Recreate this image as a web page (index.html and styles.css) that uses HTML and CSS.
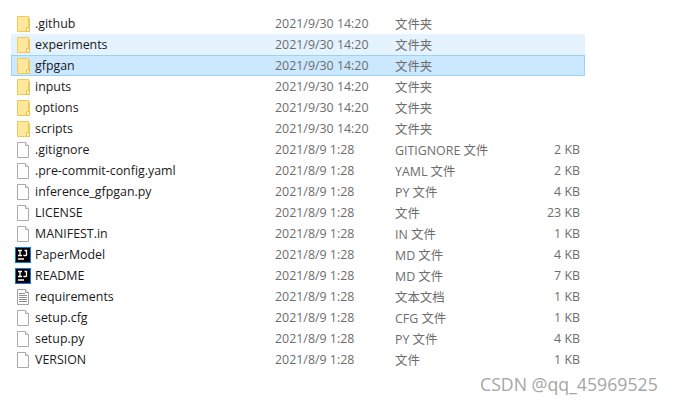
FILE: index.html
```html
<!DOCTYPE html>
<html lang="en">
<head>
    <meta charset="UTF-8"/>
    <title>gfpgan</title>
    <link rel="stylesheet" href="styles.css">
</head>
<body>
    <svg class="defs" width="0" height="0">
        <symbol id="folder" viewBox="-2 0 16 16">
            <path d="M.5 .5H11.500V15.500H.5Z" fill="#ffe79c" stroke="#f0c95a"/>
            <path d="M11.500 2.500H12.500V15.500H11.500Z" fill="#fbe08e" stroke="#f0c95a"/>
            <path d="M9.500 15.500V11.500H12.500V15.500Z" fill="#fff0bd" stroke="#ecc14e"/>
        </symbol>
        <symbol id="file" viewBox="-2 0 16 16">
            <path d="M.5 .5H8.500L11.500 3.500V15.500H.5Z" fill="#fff" stroke="#ababab"/>
            <path d="M8.500 .5V3.500H11.500" fill="#f2f2f2" stroke="#ababab"/>
        </symbol>
        <symbol id="textfile" viewBox="-2 0 16 16">
            <path d="M.5 .5H8.500L11.500 3.500V15.500H.5Z" fill="#fff" stroke="#a0a0a0"/>
            <path d="M8.500 .5V3.500H11.500" fill="#f2f2f2" stroke="#a0a0a0"/>
            <path d="M2 4.500H8M2 6.500H10M2 8.500H10M2 10.500H10M2 12.500H10" stroke="#8c8c8c"/>
        </symbol>
        <symbol id="idea" viewBox="0 0 16 16">
            <rect width="16" height="16" fill="#0a78e6"/>
            <rect x="1" y="1" width="14" height="14" fill="#000"/>
            <path d="M3 3.500H7M5 3.500V8.500M3 8.500H7M8.500 8Q9.500 9.200 11.500 8.200V3.500H9.500M3 12H9" fill="none" stroke="#fff" stroke-width="1.300"/>
        </symbol>
    </svg>

    <div class="ticks">
        <span class="tick"></span>
        <span class="tick"></span>
        <span class="tick"></span>
        <span class="tick"></span>
    </div>

    <div class="list">
        <div class="row"><svg class="ico"><use href="#folder"/></svg><span class="name">.github</span><span class="date">2021/9/30 14:20</span><span class="type">文件夹</span><span class="size"></span></div>
        <div class="row hover"><svg class="ico"><use href="#folder"/></svg><span class="name">experiments</span><span class="date">2021/9/30 14:20</span><span class="type">文件夹</span><span class="size"></span></div>
        <div class="row selected"><svg class="ico"><use href="#folder"/></svg><span class="name">gfpgan</span><span class="date">2021/9/30 14:20</span><span class="type">文件夹</span><span class="size"></span></div>
        <div class="row"><svg class="ico"><use href="#folder"/></svg><span class="name">inputs</span><span class="date">2021/9/30 14:20</span><span class="type">文件夹</span><span class="size"></span></div>
        <div class="row"><svg class="ico"><use href="#folder"/></svg><span class="name">options</span><span class="date">2021/9/30 14:20</span><span class="type">文件夹</span><span class="size"></span></div>
        <div class="row"><svg class="ico"><use href="#folder"/></svg><span class="name">scripts</span><span class="date">2021/9/30 14:20</span><span class="type">文件夹</span><span class="size"></span></div>
        <div class="row"><svg class="ico"><use href="#file"/></svg><span class="name">.gitignore</span><span class="date">2021/8/9 1:28</span><span class="type">GITIGNORE 文件</span><span class="size">2 KB</span></div>
        <div class="row"><svg class="ico"><use href="#file"/></svg><span class="name">.pre-commit-config.yaml</span><span class="date">2021/8/9 1:28</span><span class="type">YAML 文件</span><span class="size">2 KB</span></div>
        <div class="row"><svg class="ico"><use href="#file"/></svg><span class="name">inference_gfpgan.py</span><span class="date">2021/8/9 1:28</span><span class="type">PY 文件</span><span class="size">4 KB</span></div>
        <div class="row"><svg class="ico"><use href="#file"/></svg><span class="name">LICENSE</span><span class="date">2021/8/9 1:28</span><span class="type">文件</span><span class="size">23 KB</span></div>
        <div class="row"><svg class="ico"><use href="#file"/></svg><span class="name">MANIFEST.in</span><span class="date">2021/8/9 1:28</span><span class="type">IN 文件</span><span class="size">1 KB</span></div>
        <div class="row"><svg class="ico"><use href="#idea"/></svg><span class="name">PaperModel</span><span class="date">2021/8/9 1:28</span><span class="type">MD 文件</span><span class="size">4 KB</span></div>
        <div class="row"><svg class="ico"><use href="#idea"/></svg><span class="name">README</span><span class="date">2021/8/9 1:28</span><span class="type">MD 文件</span><span class="size">7 KB</span></div>
        <div class="row"><svg class="ico"><use href="#textfile"/></svg><span class="name">requirements</span><span class="date">2021/8/9 1:28</span><span class="type">文本文档</span><span class="size">1 KB</span></div>
        <div class="row"><svg class="ico"><use href="#file"/></svg><span class="name">setup.cfg</span><span class="date">2021/8/9 1:28</span><span class="type">CFG 文件</span><span class="size">1 KB</span></div>
        <div class="row"><svg class="ico"><use href="#file"/></svg><span class="name">setup.py</span><span class="date">2021/8/9 1:28</span><span class="type">PY 文件</span><span class="size">4 KB</span></div>
        <div class="row"><svg class="ico"><use href="#file"/></svg><span class="name">VERSION</span><span class="date">2021/8/9 1:28</span><span class="type">文件</span><span class="size">1 KB</span></div>
    </div>

    <div class="watermark">CSDN @qq_45969525</div>
</body>
</html>
```

FILE: styles.css
```css
body{
    margin: 0;
    height: 405px;
    overflow: hidden;
    position: relative;
    background: #FFFFFF;
    color: #1A1A1A;
    font-family: 'Open Sans', 'Noto Sans CJK SC', sans-serif;
    font-size: 12.4px;
}

.defs{
    position: absolute;
}

.ticks{
    display: flex;
    height: 7px;
    padding-left: 268px;
}

.tick{
    width: 2px;
    height: 7px;
    background: #E5E5E5;
    margin-right: 118px;
}

.tick:nth-child(3){
    margin-right: 78px;
}

.list{
    margin: 6px 0 0 11px;
    width: 574px;
}

.row{
    display: flex;
    align-items: center;
    height: 21px;
    box-sizing: border-box;
    border: 1px solid transparent;
}

.hover{
    background: #E5F3FF;
    border-color: #E5F3FF;
}

.selected{
    background: #CCE8FF;
    border-color: #99D1FF;
}

.ico{
    width: 16px;
    height: 16px;
    margin-left: 3px;
    flex: none;
}

.name{
    width: 240px;
    margin-left: 4px;
    flex: none;
}

.date{
    width: 120px;
    flex: none;
    color: #6D6D6D;
}

.type{
    width: 100px;
    flex: none;
    color: #6D6D6D;
}

.size{
    width: 85px;
    flex: none;
    text-align: right;
    color: #6D6D6D;
}

.watermark{
    position: absolute;
    left: 480px;
    top: 372px;
    font-size: 17.7px;
    color: #A6A6A6;
}
```
